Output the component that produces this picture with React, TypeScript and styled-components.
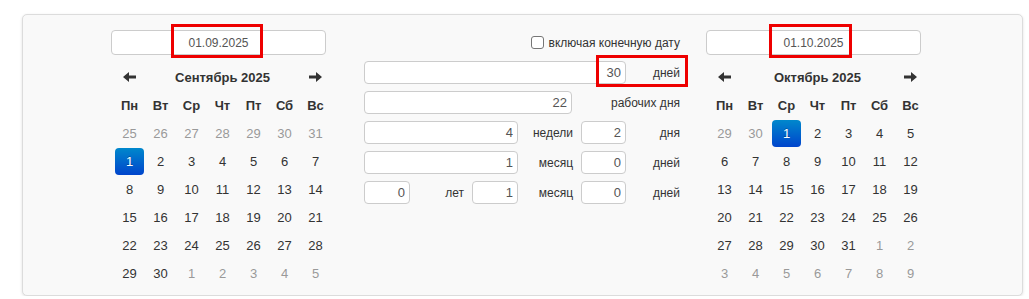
import styled, { createGlobalStyle, css } from "styled-components";

const GlobalStyle = createGlobalStyle`
  body {
    margin: 0;
    background: #fff;
    font-family: "Liberation Sans", Arial, sans-serif;
    color: #333;
  }
`;

type Day = { n: number; muted: boolean; active: boolean };

const DAY_NAMES = ["Пн", "Вт", "Ср", "Чт", "Пт", "Сб", "Вс"];

// datepicker always shows at least one day of the previous month
const buildMonth = (year: number, month: number, activeDay: number): Day[] => {
  const first = new Date(year, month, 1);
  const offset = (first.getDay() + 6) % 7 || 7;
  const days: Day[] = [];
  for (let i = 0; i < 42; i++) {
    const d = new Date(year, month, 1 - offset + i);
    const inMonth = d.getMonth() === month;
    days.push({ n: d.getDate(), muted: !inMonth, active: inMonth && d.getDate() === activeDay });
  }
  return days;
};

const Arrow = ({ dir }: { dir: "left" | "right" }) => (
  <svg width="13" height="10" viewBox="0 0 13 10" style={dir === "right" ? { transform: "scaleX(-1)" } : undefined}>
    <path d="M0 5 L6 0 L6 3.5 L13 3.5 L13 6.5 L6 6.5 L6 10 Z" fill="#333" />
  </svg>
);

const Calendar = ({ title, days }: { title: string; days: Day[] }) => (
  <CalGrid>
    <NavCell>
      <Arrow dir="left" />
    </NavCell>
    <MonthTitle>{title}</MonthTitle>
    <NavCell>
      <Arrow dir="right" />
    </NavCell>
    {DAY_NAMES.map((d) => (
      <DayName key={d}>{d}</DayName>
    ))}
    {days.map((d, i) => (
      <DayCell key={i} $muted={d.muted} $active={d.active}>
        {d.n}
      </DayCell>
    ))}
  </CalGrid>
);

const App = () => {
  const sep = buildMonth(2025, 8, 1);
  const oct = buildMonth(2025, 9, 1);

  return (
    <>
      <GlobalStyle />
      <Panel>
        <Column>
          <DateWrap>
            <DateInput readOnly value="01.09.2025" />
            <Highlight $left={60} $top={-6} $width={92} $height={34} />
          </DateWrap>
          <Calendar title="Сентябрь 2025" days={sep} />
        </Column>

        <Middle>
          <CheckRow>
            <Check type="checkbox" />
            <span>включая конечную дату</span>
          </CheckRow>
          <Row>
            <NumInput $w={262} readOnly value="30" />
            <Label>дней</Label>
            <Highlight $left={232} $top={-6} $width={92} $height={32} />
          </Row>
          <Row>
            <NumInput $w={208} readOnly value="22" />
            <Label>рабочих дня</Label>
          </Row>
          <Row>
            <NumInput $w={154} readOnly value="4" />
            <Label $w={63}>недели</Label>
            <NumInput $w={45} readOnly value="2" />
            <Label>дня</Label>
          </Row>
          <Row>
            <NumInput $w={154} readOnly value="1" />
            <Label $w={63}>месяц</Label>
            <NumInput $w={45} readOnly value="0" />
            <Label>дней</Label>
          </Row>
          <Row>
            <NumInput $w={46} readOnly value="0" />
            <Label $w={62}>лет</Label>
            <NumInput $w={46} readOnly value="1" />
            <Label $w={63}>месяц</Label>
            <NumInput $w={45} readOnly value="0" />
            <Label>дней</Label>
          </Row>
        </Middle>

        <Column>
          <DateWrap>
            <DateInput readOnly value="01.10.2025" />
            <Highlight $left={63} $top={-6} $width={83} $height={34} />
          </DateWrap>
          <Calendar title="Октябрь 2025" days={oct} />
        </Column>
      </Panel>
    </>
  );
};

export default App;

const Panel = styled.div`
  display: flex;
  align-items: flex-start;
  box-sizing: border-box;
  margin: 14px 0 0 22px;
  width: 1001px;
  padding: 15px 0 8px 88px;
  background: #f9f9f9;
  border: 1px solid #dcdcdc;
  border-radius: 5px;
  box-shadow: 0 1px 3px rgba(0, 0, 0, 0.12);
`;

const Column = styled.div`
  display: flex;
  flex-direction: column;
  width: 221px;
  &:last-child {
    margin-left: 26px;
  }
`;

const Middle = styled.div`
  display: flex;
  flex-direction: column;
  gap: 7px;
  width: 316px;
  margin-left: 32px;
  font-size: 12px;
`;

const fieldStyle = css`
  box-sizing: border-box;
  height: 23px;
  background: #fff;
  border: 1px solid #ccc;
  border-radius: 4px;
  color: #555;
  font-family: "Liberation Sans", Arial, sans-serif;
  outline: none;
`;

const DateWrap = styled.div`
  position: relative;
  width: 215px;
`;

const DateInput = styled.input`
  ${fieldStyle}
  display: block;
  width: 215px;
  height: 25px;
  font-size: 12px;
  text-align: center;
`;

const Highlight = styled.div<{ $left: number; $top: number; $width: number; $height: number }>`
  position: absolute;
  left: ${(p) => p.$left}px;
  top: ${(p) => p.$top}px;
  width: ${(p) => p.$width}px;
  height: ${(p) => p.$height}px;
  box-sizing: border-box;
  border: 3px solid #ee0000;
  pointer-events: none;
`;

const CalGrid = styled.div`
  display: grid;
  grid-template-columns: repeat(7, 31px);
  grid-auto-rows: 28px;
  margin: 8px 0 0 3px;
  font-size: 13px;
`;

const NavCell = styled.div`
  display: flex;
  align-items: center;
  justify-content: center;
`;

const MonthTitle = styled.div`
  grid-column: span 5;
  display: flex;
  align-items: center;
  justify-content: center;
  font-weight: bold;
  font-size: 13px;
`;

const DayName = styled.div`
  display: flex;
  align-items: center;
  justify-content: center;
  font-weight: bold;
`;

const DayCell = styled.div<{ $muted: boolean; $active: boolean }>`
  display: flex;
  align-items: center;
  justify-content: center;
  margin: 1px 1px 0 1px;
  border-radius: 4px;
  color: ${(p) => (p.$muted ? "#999" : "#333")};
  ${(p) =>
    p.$active &&
    css`
      color: #fff;
      background: linear-gradient(to bottom, #0088cc, #0044cc);
      text-shadow: 0 -1px 0 rgba(0, 0, 0, 0.25);
    `}
`;

const CheckRow = styled.div`
  display: flex;
  align-items: center;
  justify-content: flex-end;
  gap: 5px;
  height: 25px;
  margin-bottom: -1px;
  color: #333;
`;

const Check = styled.input`
  appearance: none;
  margin: 0;
  width: 13px;
  height: 13px;
  background: #fff;
  border: 1px solid #767676;
  border-radius: 3px;
`;

const Row = styled.div`
  position: relative;
  display: flex;
  align-items: center;
`;

const NumInput = styled.input<{ $w: number }>`
  ${fieldStyle}
  width: ${(p) => p.$w}px;
  padding: 0 4px;
  font-size: 13px;
  text-align: right;
`;

const Label = styled.span<{ $w?: number }>`
  box-sizing: border-box;
  ${(p) => (p.$w ? `width: ${p.$w}px;` : "flex: 1;")}
  padding-right: ${(p) => (p.$w ? 8 : 0)}px;
  text-align: right;
  color: #333;
`;
